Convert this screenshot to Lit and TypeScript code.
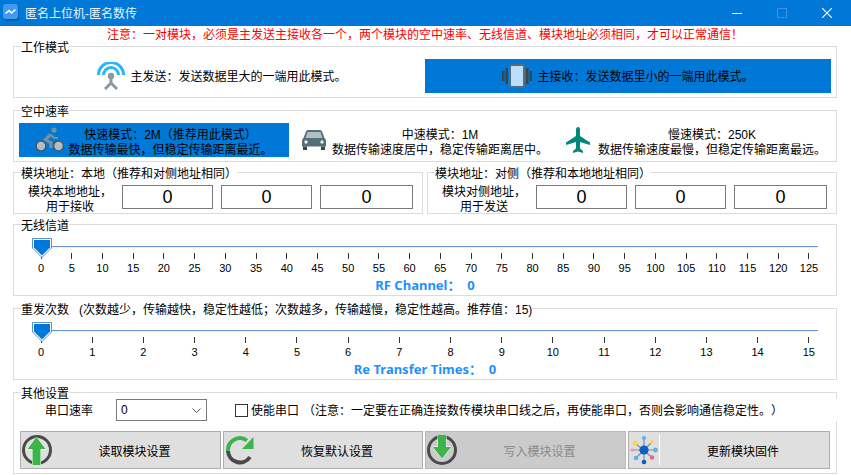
import { LitElement, html, css, svg } from "lit";
import { customElement } from "lit/decorators.js";

const FONT = css`"Liberation Sans", "Noto Sans CJK SC", sans-serif`;

const icons = {
  logo: svg`<rect x="1" y="1" width="15" height="16" rx="3" fill="#0a5fae"/><rect width="15" height="15" rx="3" fill="#3f9bf0"/><path d="M2.5 9.5 L6 6.5 L8.5 9 L12.5 5.5" fill="none" stroke="#fff" stroke-width="1.6"/>`,
  antenna: svg`<g fill="none"><path d="M1.5 13 A12.5 12.5 0 0 1 26.5 13" stroke="#29b6f6" stroke-width="3"/><path d="M6.5 13 A7.5 7.5 0 0 1 21.5 13" stroke="#29b6f6" stroke-width="3"/><path d="M14 15 V21 M14 21 L8 27 M14 21 L20 27" stroke="#8a9aa5" stroke-width="3"/></g><circle cx="14" cy="14" r="3.2" fill="#8a9aa5"/>`,
  vibrate: svg`<path fill="#37474f" d="M0 7h2.5v10H0zM3.5 4H6v16H3.5zM24 4h2.5v16H24zM27.5 7H30v10h-2.5z"/><rect x="8" y="1" width="14" height="22" rx="1.5" fill="#bbdefb" stroke="#546e7a" stroke-width="2"/>`,
  bike: svg`<g fill="#b0bec5" stroke="#455a64" stroke-width="1.6"><circle cx="6" cy="19" r="5"/><circle cx="23.5" cy="19" r="5"/></g><circle cx="19" cy="3" r="2.6" fill="#78909c"/><path d="M15.5 7.5 L10.5 12.5 L16 16 V21" fill="none" stroke="#78909c" stroke-width="3.2"/><path d="M15.5 7.5 L19 11 H23" fill="none" stroke="#78909c" stroke-width="2.2"/>`,
  car: svg`<path fill="#546e7a" d="M4 1.5Q4.5 0 6 0H18Q19.5 0 20 1.5L22.5 8Q24 9 24 11V16.5H0V11Q0 9 1.5 8Z"/><path fill="#b0bec5" d="M5.5 2H18.5L20.5 8H3.5Z"/><circle cx="4" cy="12" r="1.7" fill="#eceff1"/><circle cx="20" cy="12" r="1.7" fill="#eceff1"/><path fill="#37474f" d="M1 16.5h4V20H1zM19 16.5h4V20h-4z"/>`,
  plane: svg`<path fill="#00897b" d="M12 0Q10 0 10 3V9L0 15.5V18L10 15V21.5L7 24V26L12 24.5L17 26V24L14 21.5V15L24 18V15.5L14 9V3Q14 0 12 0Z"/>`,
  read: svg`<circle cx="15" cy="15" r="13.5" fill="none" stroke="#4a4a4a" stroke-width="3"/><path fill="#3cb44a" stroke="#fff" stroke-width="1" paint-order="stroke" d="M14.5 2L23.5 14H18.5V30H10.5V14H5.5Z"/>`,
  restore: svg`<g fill="none" stroke-width="4"><path d="M3 16A12 12 0 0 1 22 5.5" stroke="#3cb44a"/><path d="M3 16A12 12 0 0 0 25 22" stroke="#4a4a4a"/></g><path fill="#3cb44a" d="M28.5 2V14H17Z"/>`,
  write: svg`<circle cx="15" cy="15" r="13.5" fill="none" stroke="#4a4a4a" stroke-width="3"/><path fill="#3cb44a" stroke="#fff" stroke-width="1" paint-order="stroke" d="M11 0H19V12H24L15 23.5L6 12H11Z"/>`,
  firmware: svg`<path stroke="#7a8fa5" stroke-width="1.2" d="M14 3V27M2 15H26M5 8L22 22.5M22 7L6 23"/><circle cx="14" cy="15" r="4.6" fill="#0d5fc4"/><circle cx="14" cy="3" r="2.1" fill="#5db3e8"/><circle cx="22" cy="7" r="1.9" fill="#ffd54f"/><circle cx="25.5" cy="15" r="2.4" fill="#5db3e8"/><circle cx="22" cy="22.5" r="2.3" fill="#f06292"/><circle cx="14" cy="27" r="2.3" fill="#0d5fc4"/><circle cx="6" cy="23" r="2.3" fill="#5db3e8"/><circle cx="2" cy="15" r="1.6" fill="#f48fb1"/><circle cx="5" cy="8" r="2.5" fill="#ffd54f"/>`,
};

@customElement("app-root")
export class AppRoot extends LitElement {
  static styles = css`
    :host {
      display: block;
      width: 851px;
      height: 475px;
      overflow: hidden;
      background: #fff;
      color: #000;
      font: 12px/15px ${FONT};
      text-spacing-trim: space-all;
    }

    svg {
      display: block;
      flex: none;
    }

    .titlebar {
      display: flex;
      align-items: center;
      height: 26px;
      background: #0078d7;
      color: #fff;
      padding-left: 3px;
    }
    .titlebar .title {
      margin: 3px 0 0 5px;
      flex: 1;
      color: #e8f3fc;
    }
    .win-btn {
      width: 45px;
      height: 26px;
      display: flex;
      align-items: center;
      justify-content: center;
    }
    .win-btns {
      display: flex;
      margin-right: 2px;
    }

    .notice {
      height: 13px;
      padding: 2px 0 0 107px;
      box-sizing: border-box;
      color: #ff0000;
      white-space: nowrap;
    }

    main {
      display: flex;
      flex-direction: column;
      margin-left: 13px;
      width: 824px;
    }

    fieldset {
      margin: 0;
      padding: 0;
      min-width: 0;
      border: 1px solid #dcdcdc;
    }
    legend {
      margin-left: 7px;
      padding: 0;
      height: 15px;
      line-height: 18px;
      background: #fff;
      white-space: pre;
    }

    .gap3 {
      margin-top: 3px;
    }
    .gap5 {
      margin-top: 5px;
    }

    .modes {
      display: grid;
      grid-template-columns: 406px 406px;
      height: 43px;
      padding: 5px 5px 0;
      box-sizing: border-box;
    }
    .mode {
      display: flex;
      align-items: center;
      justify-content: center;
      height: 34px;
      gap: 5px;
      white-space: nowrap;
    }
    .mode > div {
      margin-top: 3px;
    }
    .mode.on {
      background: #0078d7;
    }

    .rates {
      display: grid;
      grid-template-columns: repeat(3, 270px);
      height: 43px;
      padding: 5px 5px 0;
      box-sizing: border-box;
    }
    .rate {
      display: flex;
      align-items: center;
      justify-content: center;
      height: 34px;
      white-space: nowrap;
    }
    .rate.on {
      background: #0078d7;
    }
    .rate .lines {
      margin-top: 6px;
      text-align: center;
    }
    .rate.fast {
      gap: 3px;
    }
    .rate.mid {
      gap: 6px;
      padding-left: 2px;
    }
    .rate.slow {
      gap: 8px;
      padding-left: 4px;
    }

    .addr-row {
      display: grid;
      grid-template-columns: 410px 410px;
      gap: 4px;
    }
    .addr {
      display: flex;
      height: 33px;
    }
    .addr .label {
      width: 112px;
      margin: 5px -4px 0 0;
      text-align: center;
      white-space: nowrap;
    }
    .addr .boxes {
      display: flex;
      gap: 8px;
      margin-top: 5px;
    }
    .addr-box {
      width: 91px;
      height: 24px;
      box-sizing: border-box;
      border: 1px solid #7a7a7a;
      text-align: center;
      font-size: 18px;
      line-height: 22px;
    }
    .addr-box.wide {
      width: 93px;
    }

    .slider {
      position: relative;
      height: 63px;
      padding-top: 14px;
      box-sizing: border-box;
    }
    .track {
      margin: 0 0 6px 38px;
      width: 766px;
      height: 1px;
      background: #6b96d4;
      box-shadow: 0 1px 0 #eef3fa;
    }
    .thumb {
      position: absolute;
      left: 18px;
      top: 6px;
    }
    .ticks {
      display: flex;
      justify-content: space-between;
      margin-left: 27px;
      width: 768px;
    }
    .tick {
      width: 0;
      display: flex;
      flex-direction: column;
      align-items: center;
      font-size: 11px;
      line-height: 14px;
    }
    .tick i {
      width: 1px;
      height: 6px;
      background: #333;
      flex: none;
      margin-bottom: 2px;
    }
    .value {
      margin-top: 3px;
      text-align: center;
      color: #1e8fff;
      font-size: 13px;
      font-weight: 700;
      font-family: "Noto Sans", "Noto Sans CJK SC", sans-serif;
      white-space: pre;
    }

    .other {
      height: 74px;
    }
    .serial {
      display: flex;
      align-items: center;
      height: 22px;
      margin: -1px -2px 0 0;
      padding-left: 31px;
      background: #fff;
      position: relative;
      white-space: nowrap;
    }
    .serial .txt {
      margin-top: 2px;
    }
    .combo {
      display: flex;
      align-items: center;
      justify-content: space-between;
      width: 91px;
      height: 22px;
      box-sizing: border-box;
      margin-left: 23px;
      padding: 0 5px 0 4px;
      border: 1px solid #7a7a7a;
    }
    .check {
      width: 13px;
      height: 13px;
      box-sizing: border-box;
      margin: 0 3px 0 28px;
      border: 1px solid #333;
    }
    .note {
      margin-left: 4px;
    }

    .actions {
      display: grid;
      grid-template-columns: 201px 200px 201px 202px;
      gap: 2px;
      margin: 10px 0 0 6px;
    }
    .action {
      display: flex;
      align-items: center;
      height: 38px;
      box-sizing: border-box;
      padding-left: 1px;
      background: #dfdfdf;
      border: 1px solid #adadad;
    }
    .action span {
      flex: 1;
      margin-top: 4px;
      padding-right: 3px;
      text-align: center;
    }
    .action.off {
      background: #cbcbcb;
      border-color: #b8b8b8;
      color: #8a8a8a;
    }
    .action .sep {
      width: 1px;
      height: 30px;
      background: #fff;
    }
  `;

  private renderSlider(count: number, step: number, value: string) {
    const ticks = Array.from({ length: count }, (_, i) => i * step);
    return html`<div class="slider">
      <div class="track"></div>
      <div class="ticks">
        ${ticks.map((t) => html`<div class="tick"><i></i>${t}</div>`)}
      </div>
      <div class="value">${value}</div>
      <svg class="thumb" width="20" height="20" viewBox="0 0 20 20">
        <path d="M0.5 0.5H19.5V10L10 19.5L0.5 10Z" fill="#fff" stroke="#5c8fd0" stroke-width="1"/>
        <path d="M2 2H18V9.5L10 17.5L2 9.5Z" fill="#0078d7"/>
      </svg>
    </div>`;
  }

  private renderAddr(title: string, l1: string, l2: string) {
    return html`<fieldset>
      <legend>${title}</legend>
      <div class="addr">
        <div class="label">${l1}<br />${l2}</div>
        <div class="boxes">
          <div class="addr-box">0</div>
          <div class="addr-box">0</div>
          <div class="addr-box wide">0</div>
        </div>
      </div>
    </fieldset>`;
  }

  render() {
    return html`
      <header class="titlebar">
        <svg width="17" height="18" viewBox="0 0 17 18">${icons.logo}</svg>
        <div class="title">匿名上位机-匿名数传</div>
        <div class="win-btns">
          <div class="win-btn">
            <svg width="10" height="10" viewBox="0 0 10 10"><path d="M0 5.5H10" stroke="#fff"/></svg>
          </div>
          <div class="win-btn">
            <svg width="10" height="10" viewBox="0 0 10 10"><rect x=".5" y=".5" width="9" height="9" fill="none" stroke="#3d93e0"/></svg>
          </div>
          <div class="win-btn">
            <svg width="10" height="10" viewBox="0 0 10 10"><path d="M0 0L10 10M10 0L0 10" stroke="#fff" stroke-width="1.1"/></svg>
          </div>
        </div>
      </header>
      <div class="notice">注意：一对模块，必须是主发送主接收各一个，两个模块的空中速率、无线信道、模块地址必须相同，才可以正常通信！</div>
      <main>
        <fieldset>
          <legend>工作模式</legend>
          <div class="modes">
            <div class="mode">
              <svg width="28" height="28" viewBox="0 0 28 28">${icons.antenna}</svg>
              <div>主发送：发送数据里大的一端用此模式。</div>
            </div>
            <div class="mode on">
              <svg width="30" height="24" viewBox="0 0 30 24">${icons.vibrate}</svg>
              <div>主接收：发送数据里小的一端用此模式。</div>
            </div>
          </div>
        </fieldset>

        <fieldset class="gap5">
          <legend>空中速率</legend>
          <div class="rates">
            <div class="rate fast on">
              <svg width="30" height="26" viewBox="0 0 30 26">${icons.bike}</svg>
              <div class="lines">快速模式：2M（推荐用此模式）<br />数据传输最快，但稳定传输距离最近。</div>
            </div>
            <div class="rate mid">
              <svg width="24" height="20" viewBox="0 0 24 20">${icons.car}</svg>
              <div class="lines">中速模式：1M<br />数据传输速度居中，稳定传输距离居中。</div>
            </div>
            <div class="rate slow">
              <svg width="24" height="26" viewBox="0 0 24 26">${icons.plane}</svg>
              <div class="lines">慢速模式：250K<br />数据传输速度最慢，但稳定传输距离最远。</div>
            </div>
          </div>
        </fieldset>

        <div class="addr-row gap3">
          ${this.renderAddr("模块地址：本地（推荐和对侧地址相同）", "模块本地地址，", "用于接收")}
          ${this.renderAddr("模块地址：对侧（推荐和本地地址相同）", "模块对侧地址，", "用于发送")}
        </div>

        <fieldset class="gap3">
          <legend>无线信道</legend>
          ${this.renderSlider(26, 5, "RF Channel：  0")}
        </fieldset>

        <fieldset class="gap5">
          <legend>重发次数   (次数越少，传输越快，稳定性越低；次数越多，传输越慢，稳定性越高。推荐值：15)</legend>
          ${this.renderSlider(16, 1, "Re Transfer Times：  0")}
        </fieldset>

        <fieldset class="gap5">
          <legend>其他设置</legend>
          <div class="other">
            <div class="serial">
              <div class="txt">串口速率</div>
              <div class="combo">
                <span>0</span>
                <svg width="9" height="5" viewBox="0 0 9 5"><path d="M.5 .5L4.5 4.5L8.5 .5" fill="none" stroke="#555"/></svg>
              </div>
              <div class="check"></div>
              <div class="txt">使能串口</div>
              <div class="txt note">（注意：一定要在正确连接数传模块串口线之后，再使能串口，否则会影响通信稳定性。）</div>
            </div>
            <div class="actions">
              <div class="action">
                <svg width="30" height="30" viewBox="0 0 30 30">${icons.read}</svg>
                <span>读取模块设置</span>
              </div>
              <div class="action">
                <svg width="30" height="30" viewBox="0 0 30 30">${icons.restore}</svg>
                <span>恢复默认设置</span>
              </div>
              <div class="action off">
                <svg width="30" height="30" viewBox="0 0 30 30">${icons.write}</svg>
                <span>写入模块设置</span>
              </div>
              <div class="action">
                <svg width="29" height="30" viewBox="0 0 29 30">${icons.firmware}</svg>
                <div class="sep"></div>
                <span>更新模块固件</span>
              </div>
            </div>
          </div>
        </fieldset>
      </main>
    `;
  }
}
